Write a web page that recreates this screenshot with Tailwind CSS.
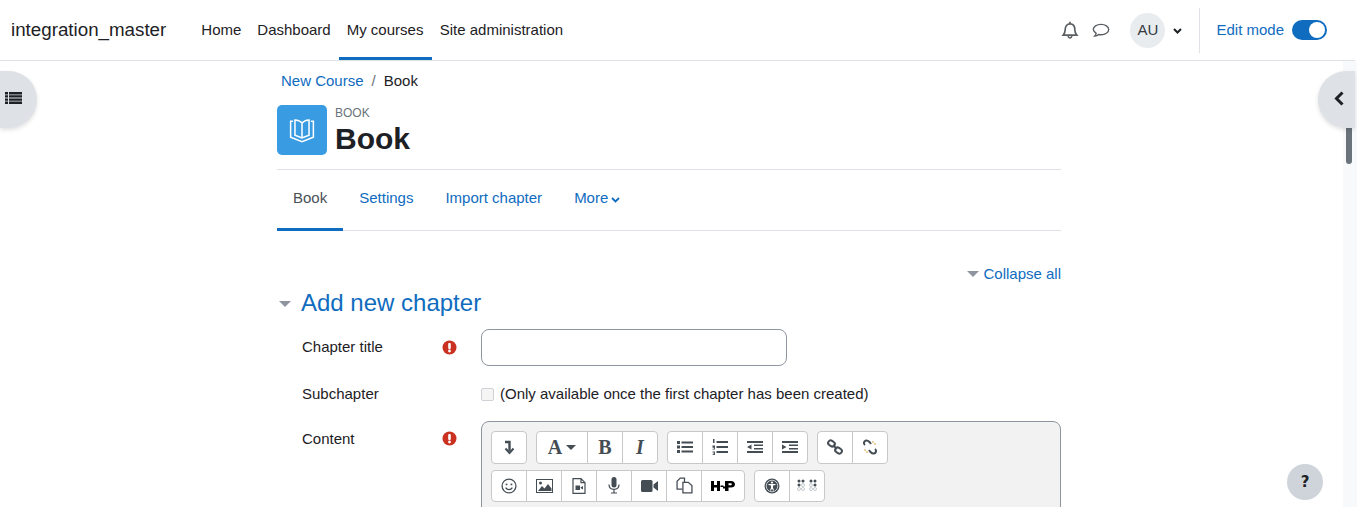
<!DOCTYPE html>
<html lang="en">
<head>
    <meta charset="UTF-8">
    <title>Book</title>
    <script src="https://cdn.jsdelivr.net/npm/@tailwindcss/browser@4"></script>
</head>
<body class="h-screen overflow-hidden bg-white text-[#1d2125] font-['Liberation_Sans',Arial,sans-serif] text-[15px] leading-[22.5px]">
    <!-- top navbar -->
    <nav class="relative z-20 h-[61px] mr-[2px] flex items-stretch bg-white border-b border-[#dee2e6] pl-[11px] pr-[28px]">
        <a class="self-center text-[18.75px] mr-[27px]">integration_master</a>
        <ul class="flex items-stretch">
            <li class="px-2 flex items-center">Home</li>
            <li class="px-2 flex items-center">Dashboard</li>
            <li class="px-2 w-[93px] flex items-center border-b-[3px] border-[#0f6cbf] pt-[3px]">My courses</li>
            <li class="px-2 flex items-center">Site administration</li>
        </ul>
        <div class="ml-auto flex items-center">
            <svg class="w-[18px] h-[18px] text-[#5b5f63]" viewBox="0 0 16 16" fill="none" stroke="currentColor" stroke-width="1.500"><path d="M2 12.600c1.200-1.300 1.700-2.300 1.700-4.800C3.700 4.600 5.400 2.600 8 2.600s4.300 2 4.300 5.200c0 2.500.5 3.500 1.700 4.800z"/><path d="M8 .6v2M6.300 13.500c.2 1 .9 1.600 1.700 1.600s1.500-.6 1.700-1.600"/></svg>
            <svg class="w-[18px] h-[18px] ml-[13px] text-[#5b5f63]" viewBox="0 0 17 16" fill="none" stroke="currentColor" stroke-width="1.300"><path d="M8.500 2.700c4 0 7.300 2.100 7.300 4.900s-3.300 4.900-7.300 4.900c-.8 0-1.500-.1-2.200-.2-1 .9-2.300 1.300-3.700 1.400.7-.7 1.200-1.500 1.300-2.500C2.300 9.800 1.200 8.800 1.200 7.600c0-2.800 3.300-4.900 7.300-4.900z"/></svg>
            <span class="ml-[20px] w-[35px] h-[35px] rounded-full bg-[#e9ecef] flex items-center justify-center text-[#343a40]">AU</span>
            <svg class="w-[9px] h-[6px] ml-[8px] mt-[2px] text-[#1d2125]" viewBox="0 0 9 6" fill="none" stroke="currentColor" stroke-width="2"><path d="M1 1l3.500 3.500L8 1"/></svg>
            <span class="w-px h-[45px] bg-[#dee2e6] ml-[17px] mr-4"></span>
            <span class="text-[#0f6cbf]">Edit mode</span>
            <span class="ml-2 w-[35px] h-5 rounded-full bg-[#0f6cbf] flex items-center justify-end pr-[2px]"><span class="w-4 h-4 rounded-full bg-white"></span></span>
        </div>
    </nav>

    <!-- left drawer toggle -->
    <div class="absolute z-10 left-0 top-[71px] w-[37px] h-[57px] bg-[#dee2e6] rounded-r-full shadow-[0_2px_4px_rgba(0,0,0,0.12)] flex items-center pl-[5px]">
        <svg class="w-[17px] h-[12px] mb-[3px] text-[#1d2125]" viewBox="0 0 17 12" fill="currentColor"><path d="M0 0h3v2.400H0zM4 0h13v2.400H4zM0 3.200h3v2.400H0zM4 3.200h13v2.400H4zM0 6.400h3v2.400H0zM4 6.400h13v2.400H4zM0 9.600h3V12H0zM4 9.600h13V12H4z"/></svg>
    </div>
    <!-- right drawer toggle -->
    <div class="absolute z-30 right-[2px] top-[71px] w-[37px] h-[57px] bg-[#dee2e6] rounded-l-full shadow-[0_2px_4px_rgba(0,0,0,0.12)] flex items-center pl-[16px]">
        <svg class="w-[10px] h-[15px] mb-[3px] text-[#1d2125]" viewBox="0 0 10 15" fill="none" stroke="currentColor" stroke-width="3"><path d="M8.500 1.500L2.500 7.500l6 6"/></svg>
    </div>
    <!-- scrollbar -->
    <div class="absolute right-0 top-[61px] bottom-0 w-[14px] bg-[#f8f9fa]">
        <div class="absolute top-[64px] left-[3px] w-[6px] h-[39px] rounded-b-[3px] bg-[#6a737b]"></div>
    </div>
    <!-- help button -->
    <div class="absolute z-10 left-[1287px] top-[464px] w-9 h-9 rounded-full bg-[#ced4da] flex items-center justify-center font-bold text-[15px] font-['DejaVu_Sans',sans-serif]">?</div>

    <main class="w-[784px] ml-[277px]">
        <div class="h-[40px] pl-1 flex items-center"><span class="text-[#0f6cbf]">New Course</span><span class="mx-2 text-[#6a737b]">/</span><span>Book</span></div>
        <header class="flex items-center h-[50px] mt-[4px]">
            <div class="w-[50px] h-[50px] rounded-[5px] bg-[#399be2] flex items-center justify-center">
                <svg class="w-[26px] h-[26px] text-white" viewBox="0 0 24 24" fill="none" stroke="currentColor" stroke-width="1.400"><path d="M12 5.500C10.500 3.800 8.500 3 5.500 2.800v14l6.500 2.500 6.500-2.500V2.800C15.500 3 13.500 3.800 12 5.500zM12 5.500v13.800"/><path d="M3.800 4H1.500v14.700L12 22.800l10.500-4.100V4h-2.300"/></svg>
            </div>
            <div class="ml-2">
                <div class="text-[12px] leading-[18px] text-[#6a737b] mt-[-1px]">BOOK</div>
                <h1 class="text-[30px] leading-[34px] font-bold">Book</h1>
            </div>
        </header>
        <div class="mt-[14px] h-[62px] flex border-y border-[#dee2e6]">
            <span class="flex items-center px-4 text-[#495057] border-b-[3px] border-[#0f6cbf] -mb-px pb-[2px]">Book</span>
            <span class="flex items-center px-4 text-[#0f6cbf] pb-[3px]">Settings</span>
            <span class="flex items-center px-4 text-[#0f6cbf] pb-[3px]">Import chapter</span>
            <span class="flex items-center px-4 text-[#0f6cbf] pb-[3px]">More<svg class="w-[9px] h-[6px] ml-[3px] mt-[2px]" viewBox="0 0 9 6" fill="none" stroke="currentColor" stroke-width="1.800"><path d="M1 1l3.500 3.500L8 1"/></svg></span>
        </div>

        <div class="mt-[32px] flex justify-end items-center text-[#0f6cbf]">
            <span class="w-0 h-0 mr-[4px] border-x-[6px] border-t-[6px] border-x-transparent border-t-[#8f959e]"></span>Collapse all
        </div>
        <div class="mt-[-2px] h-[40px] flex items-center">
            <span class="w-0 h-0 ml-[2px] mr-[10px] border-x-[6px] border-t-[6px] border-x-transparent border-t-[#8f959e]"></span>
            <h2 class="text-[24px] text-[#0f6cbf]">Add new chapter</h2>
        </div>

        <form class="mt-[5px]">
            <div class="flex h-[37px] items-center">
                <label class="w-[140px] ml-[25px] shrink-0">Chapter title</label>
                <svg class="w-[15px] h-[15px] mr-[24px] text-[#ca3120]" viewBox="0 0 15 15"><circle cx="7.500" cy="7.500" r="7" fill="currentColor"/><rect x="6.200" y="3" width="2.600" height="6" rx="1" fill="#fff"/><circle cx="7.500" cy="11" r="1.400" fill="#fff"/></svg>
                <input type="text" class="w-[306px] h-[37px] rounded-[8px] border border-[#8f959e] bg-white">
            </div>
            <div class="flex h-[24px] items-center mt-[17px]">
                <label class="w-[179px] ml-[25px] shrink-0">Subchapter</label>
                <span class="w-[13px] h-[13px] rounded-[2px] border border-[#cfd2d6] bg-[#f5f5f5]"></span>
                <span class="ml-[6px]">(Only available once the first chapter has been created)</span>
            </div>
            <div class="flex mt-[14px]">
                <label class="w-[140px] ml-[25px] shrink-0 mt-[7px]">Content</label>
                <svg class="w-[15px] h-[15px] mt-[10px] mr-[24px] text-[#ca3120]" viewBox="0 0 15 15"><circle cx="7.500" cy="7.500" r="7" fill="currentColor"/><rect x="6.200" y="3" width="2.600" height="6" rx="1" fill="#fff"/><circle cx="7.500" cy="11" r="1.400" fill="#fff"/></svg>
                <div class="w-[580px] h-[200px] rounded-t-[8px] border border-[#8f959e] bg-[#f2f2f2] pt-[9px] pl-[9px] pr-2">
                    <div class="flex gap-[9px]">
                        <div class="flex h-[33px] rounded-[4px] border border-[#c8c8c8] bg-white">
                            <span class="w-[34px] flex items-center justify-center"><svg class="w-[14px] h-[16px] text-[#444c54]" viewBox="0 0 14 16" fill="none" stroke="currentColor" stroke-width="2.400"><path d="M3 3h4.500v9"/><path d="M3.500 9.500L7.500 14l4-4.500" stroke-width="2"/></svg></span>
                        </div>
                        <div class="flex h-[33px] rounded-[4px] border border-[#c8c8c8] bg-white divide-x divide-[#c8c8c8] font-['Liberation_Serif',serif] font-bold text-[#444c54] text-[20px]">
                            <span class="w-[51px] flex items-center justify-center gap-[4px]">A<span class="w-0 h-0 border-x-[5px] border-t-[5px] border-x-transparent border-t-[#444c54]"></span></span>
                            <span class="w-[35px] flex items-center justify-center">B</span>
                            <span class="w-[34px] flex items-center justify-center italic">I</span>
                        </div>
                        <div class="flex h-[33px] rounded-[4px] border border-[#c8c8c8] bg-white divide-x divide-[#c8c8c8] text-[#444c54]">
                            <span class="w-[35px] flex items-center justify-center"><svg class="w-4 h-[14px]" viewBox="0 0 16 14" fill="currentColor"><path d="M0 1h3v3H0zM0 5.500h3v3H0zM0 10h3v3H0zM4.500 1.500H16v2H4.500zM4.500 6H16v2H4.500zM4.500 10.500H16v2H4.500z"/></svg></span>
                            <span class="w-[35px] flex items-center justify-center"><svg class="w-4 h-4" viewBox="0 0 16 16" fill="currentColor"><path d="M1 0h1.500v4H1zM.5 6.500h2.500v4H.5V9.700h1.700v-1H.5zM.5 12.500h2.500V16H.5v-.8h1.700v-.6H1v-.6h1.200v-.6H.5zM4.500 2H16v2H4.500zM4.500 7H16v2H4.500zM4.500 12H16v2H4.500z"/></svg></span>
                            <span class="w-[35px] flex items-center justify-center"><svg class="w-4 h-[14px]" viewBox="0 0 16 14" fill="currentColor"><path d="M0 1h16v2H0zM7 4.500h9v1.500H7zM7 8h9v1.500H7zM0 11h16v2H0zM4.500 4.500v5L0 7z"/></svg></span>
                            <span class="w-[34px] flex items-center justify-center"><svg class="w-4 h-[14px]" viewBox="0 0 16 14" fill="currentColor"><path d="M0 1h16v2H0zM7 4.500h9v1.500H7zM7 8h9v1.500H7zM0 11h16v2H0zM0 4.500v5L4.500 7z"/></svg></span>
                        </div>
                        <div class="flex h-[33px] rounded-[4px] border border-[#c8c8c8] bg-white divide-x divide-[#c8c8c8] text-[#444c54]">
                            <span class="w-[35px] flex items-center justify-center"><svg class="w-4 h-4" viewBox="0 0 16 16" fill="none" stroke="currentColor" stroke-width="2"><rect x="1" y="2" width="7" height="5" rx="2.500" transform="rotate(35 4.500 4.500)"/><rect x="8" y="9" width="7" height="5" rx="2.500" transform="rotate(35 11.500 11.500)"/><path d="M6 6l4 4"/></svg></span>
                            <span class="w-[34px] flex items-center justify-center"><svg class="w-4 h-4" viewBox="0 0 16 16" fill="none" stroke="currentColor" stroke-width="2"><path d="M3 6C1 4.500 2 2 4 1.500c1.500-.3 2.500.5 3.500 1.500L9 5"/><path d="M13 10c2 1.500 1 4-1 4.500-1.500.3-2.500-.5-3.500-1.500L7 11"/><path d="M11 2v2M14 5h-2M2 11h2M5 14v-2" stroke="#d9a441" stroke-width="1"/></svg></span>
                        </div>
                    </div>
                    <div class="flex gap-[9px] mt-[6px]">
                        <div class="flex h-[32px] rounded-[4px] border border-[#c8c8c8] bg-white divide-x divide-[#c8c8c8] text-[#444c54]">
                            <span class="w-[35px] flex items-center justify-center"><svg class="w-4 h-4" viewBox="0 0 15 15" fill="none" stroke="currentColor" stroke-width="1.200"><circle cx="7.500" cy="7.500" r="6.500"/><circle cx="5.200" cy="6" r=".9" fill="currentColor" stroke="none"/><circle cx="9.800" cy="6" r=".9" fill="currentColor" stroke="none"/><path d="M4.300 9c.8 1.300 1.900 2 3.200 2s2.400-.7 3.200-2"/></svg></span>
                            <span class="w-[35px] flex items-center justify-center"><svg class="w-[17px] h-[14px]" viewBox="0 0 17 14"><rect x=".5" y=".5" width="16" height="13" fill="none" stroke="currentColor"/><path d="M2 12l4-5 2.500 2.500L12 5l3.500 4.500V12z" fill="currentColor"/><circle cx="4.500" cy="4" r="1.500" fill="currentColor"/></svg></span>
                            <span class="w-[35px] flex items-center justify-center"><svg class="w-[14px] h-4" viewBox="0 0 14 16"><path d="M1 .7h8l4 4v10.600H1zM9 .7v4h4" fill="none" stroke="currentColor" stroke-width="1.200"/><path d="M3.500 7.500h4.500v4.500H3.500zM8.500 9.500l2.500-1.500v3.500L8.500 10z" fill="currentColor"/></svg></span>
                            <span class="w-[35px] flex items-center justify-center"><svg class="w-[12px] h-[17px]" viewBox="0 0 12 17"><rect x="3.500" y="0" width="5" height="10.500" rx="2.500" fill="currentColor"/><path d="M1 7.500c0 3 2 4.800 5 4.800s5-1.800 5-4.800M6 12.300v3.200M3 16h6" fill="none" stroke="currentColor" stroke-width="1.200"/></svg></span>
                            <span class="w-[35px] flex items-center justify-center"><svg class="w-[17px] h-3" viewBox="0 0 17 12" fill="currentColor"><rect x="0" y="0" width="11.500" height="12" rx="1.500"/><path d="M12.500 4.500L17 1v10l-4.500-3.500z"/></svg></span>
                            <span class="w-[35px] flex items-center justify-center"><svg class="w-[17px] h-[17px]" viewBox="0 0 16 16" fill="none" stroke="currentColor" stroke-width="1.200"><path d="M6 11.500H1V4l3-3h4v4"/><path d="M6.500 5h5l3.500 3v7H6.500z" fill="#fff"/></svg></span>
                            <span class="w-[42px] flex items-center justify-center"><svg class="w-[24px] h-[12px] text-black" viewBox="0 0 24 12" fill="currentColor"><path d="M0 1h3v4h3V1h3v10H6V7.500H3V11H0zM14 1h6c2.500 0 4 1.300 4 3.300s-1.500 3.300-4 3.300h-2.500V11H14V8.500h-2V6.500h2zM17.500 3.300v2h2c.8 0 1.300-.4 1.300-1s-.5-1-1.300-1zM9.500 5.500h3v1.500h-3z"/></svg></span>
                        </div>
                        <div class="flex h-[32px] rounded-[4px] border border-[#c8c8c8] bg-white divide-x divide-[#c8c8c8] text-[#444c54]">
                            <span class="w-[35px] flex items-center justify-center"><svg class="w-4 h-4" viewBox="0 0 16 16"><circle cx="8" cy="8" r="7.500" fill="currentColor"/><circle cx="8" cy="8" r="5.800" fill="none" stroke="#fff" stroke-width=".7"/><circle cx="8" cy="4.600" r="1.100" fill="#fff"/><path d="M4.500 6h7v1l-2.500.6v2l1 3h-1L8 10.500 7 12.600H6l1-3v-2L4.500 7z" fill="#fff"/></svg></span>
                            <span class="w-[34px] flex items-center justify-center"><svg class="w-5 h-[14px]" viewBox="0 0 20 14" fill="#444c54"><circle cx="2" cy="2" r="1.500"/><circle cx="6" cy="2" r="1.500"/><circle cx="2" cy="6" r="1.500"/><circle cx="14" cy="2" r="1.500"/><circle cx="18" cy="2" r="1.500"/><circle cx="18" cy="6" r="1.500"/><g fill="none" stroke="#b9bdc1" stroke-width=".8"><circle cx="6" cy="6" r="1.500"/><circle cx="2" cy="10" r="1.500"/><circle cx="6" cy="10" r="1.500"/><circle cx="14" cy="6" r="1.500"/><circle cx="14" cy="10" r="1.500"/><circle cx="18" cy="10" r="1.500"/></g></svg></span>
                        </div>
                    </div>
                </div>
            </div>
        </form>
    </main>
</body>
</html>
